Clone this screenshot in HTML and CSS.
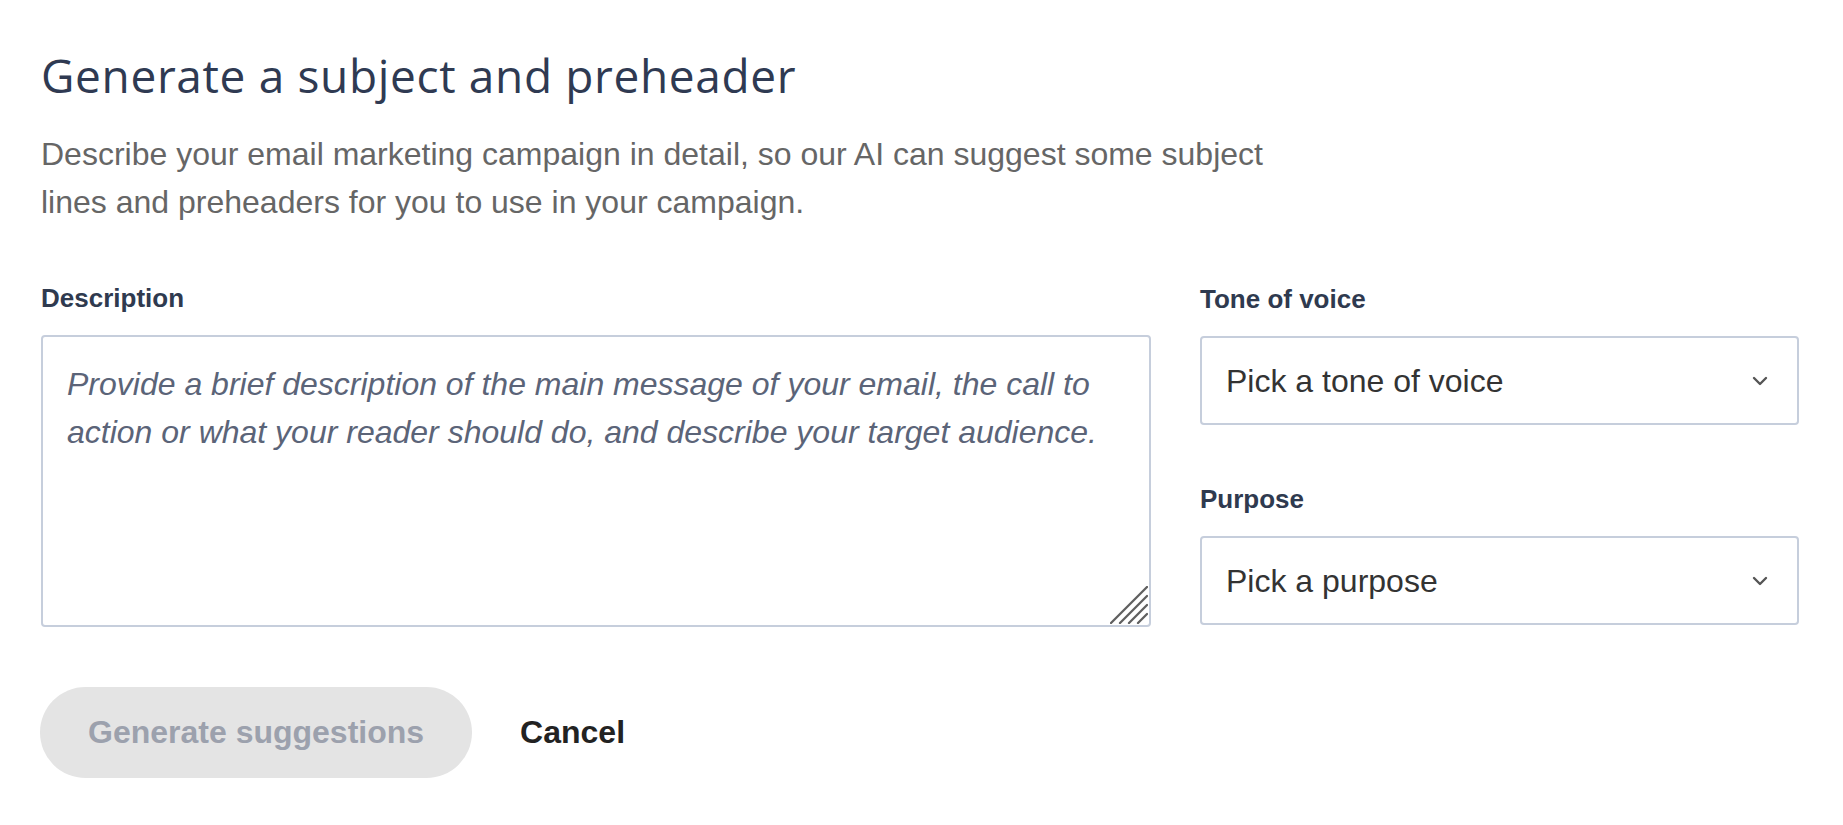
FILE: index.html
```html
<!DOCTYPE html>
<html lang="en">
<head>
<meta charset="utf-8">
<title>Generate a subject and preheader</title>
<link rel="stylesheet" href="styles.css">
</head>
<body>
<main class="page">
  <h1 class="title">Generate a subject and preheader</h1>
  <p class="intro">Describe your email marketing campaign in detail, so our AI can suggest some subject lines and preheaders for you to use in your campaign.</p>

  <div class="form-grid">
    <div class="col-left">
      <label class="label" for="desc">Description</label>
      <div class="textarea-wrap">
        <textarea id="desc" class="textarea" placeholder="Provide a brief description of the main message of your email, the call to action or what your reader should do, and describe your target audience."></textarea>
        <svg class="grip" width="38" height="38" viewBox="0 0 38 38" aria-hidden="true">
          <g stroke="#5f5f5f" stroke-width="2.3" stroke-linecap="round">
            <line x1="1" y1="37" x2="37" y2="1"/>
            <line x1="10" y1="37" x2="37" y2="10"/>
            <line x1="19" y1="37" x2="37" y2="19"/>
            <line x1="28" y1="37" x2="37" y2="28"/>
          </g>
        </svg>
      </div>
    </div>

    <div class="col-right">
      <label class="label" for="tone">Tone of voice</label>
      <div class="select-wrap">
        <select id="tone" class="select"><option>Pick a tone of voice</option></select>
        <svg class="chevron" width="16" height="10" viewBox="0 0 16 10" aria-hidden="true"><path d="M2 2 L8 8 L14 2" fill="none" stroke="#555" stroke-width="2.4" stroke-linecap="round" stroke-linejoin="round"/></svg>
      </div>

      <label class="label label-second" for="purpose">Purpose</label>
      <div class="select-wrap">
        <select id="purpose" class="select"><option>Pick a purpose</option></select>
        <svg class="chevron" width="16" height="10" viewBox="0 0 16 10" aria-hidden="true"><path d="M2 2 L8 8 L14 2" fill="none" stroke="#555" stroke-width="2.4" stroke-linecap="round" stroke-linejoin="round"/></svg>
      </div>
    </div>
  </div>

  <div class="actions">
    <button class="btn-primary" disabled>Generate suggestions</button>
    <button class="btn-link">Cancel</button>
  </div>
</main>
</body>
</html>
```

FILE: styles.css
```css
* {
  box-sizing: border-box;
}

html, body {
  margin: 0;
  padding: 0;
  background: #ffffff;
}

body {
  font-family: "Liberation Sans", Arial, sans-serif;
}

.page {
  padding: 48px 44px 0 41px;
}

.title {
  margin: 0;
  font-family: "Open Sans", "Noto Sans", sans-serif;
  font-weight: 400;
  font-size: 46px;
  line-height: 54px;
  color: #2f3a52;
  letter-spacing: 0.65px;
}

.intro {
  margin: 28px 0 57px 0;
  max-width: 1262px;
  font-size: 32px;
  line-height: 48px;
  color: #666666;
}

.form-grid {
  display: grid;
  grid-template-columns: 1fr 599px;
  column-gap: 49px;
  align-items: start;
}

.col-left,
.col-right {
  display: flex;
  flex-direction: column;
}

.col-right {
  padding-top: 1px;
}

.label {
  display: block;
  font-weight: 700;
  font-size: 26px;
  line-height: 30px;
  color: #2f3a4f;
  margin-bottom: 22px;
}

.label-second {
  margin-top: 59px;
}

.textarea-wrap {
  position: relative;
}

.textarea {
  display: block;
  width: 100%;
  height: 292px;
  margin: 0;
  padding: 23px 22px 20px 24px;
  border: 2px solid #c6cedc;
  border-radius: 4px;
  resize: none;
  font-family: "Liberation Sans", Arial, sans-serif;
  font-size: 32px;
  line-height: 48px;
  color: #333;
  background: #fff;
  outline: none;
}

.textarea::placeholder {
  font-style: italic;
  color: #5b6478;
  opacity: 1;
}

.grip {
  position: absolute;
  right: 3px;
  bottom: 3px;
}

.select-wrap {
  position: relative;
}

.select {
  display: block;
  width: 100%;
  height: 89px;
  margin: 0;
  padding: 0 60px 0 24px;
  border: 2px solid #c6cedc;
  border-radius: 4px;
  background: #fff;
  appearance: none;
  -webkit-appearance: none;
  font-family: "Liberation Sans", Arial, sans-serif;
  font-size: 32px;
  color: #333;
  outline: none;
}

.chevron {
  position: absolute;
  right: 31px;
  top: 50%;
  margin-top: -5px;
  pointer-events: none;
}

.actions {
  display: flex;
  align-items: center;
  margin-top: 60px;
}

.btn-primary {
  height: 91px;
  padding: 0 48px;
  margin: 0 0 0 -1px;
  border: none;
  border-radius: 46px;
  background: #e4e4e4;
  color: #9ca1ad;
  font-family: "Liberation Sans", Arial, sans-serif;
  font-weight: 700;
  font-size: 32px;
}

.btn-link {
  margin-left: 48px;
  padding: 0;
  border: none;
  background: none;
  color: #222;
  font-family: "Liberation Sans", Arial, sans-serif;
  font-weight: 700;
  font-size: 32px;
}
```
